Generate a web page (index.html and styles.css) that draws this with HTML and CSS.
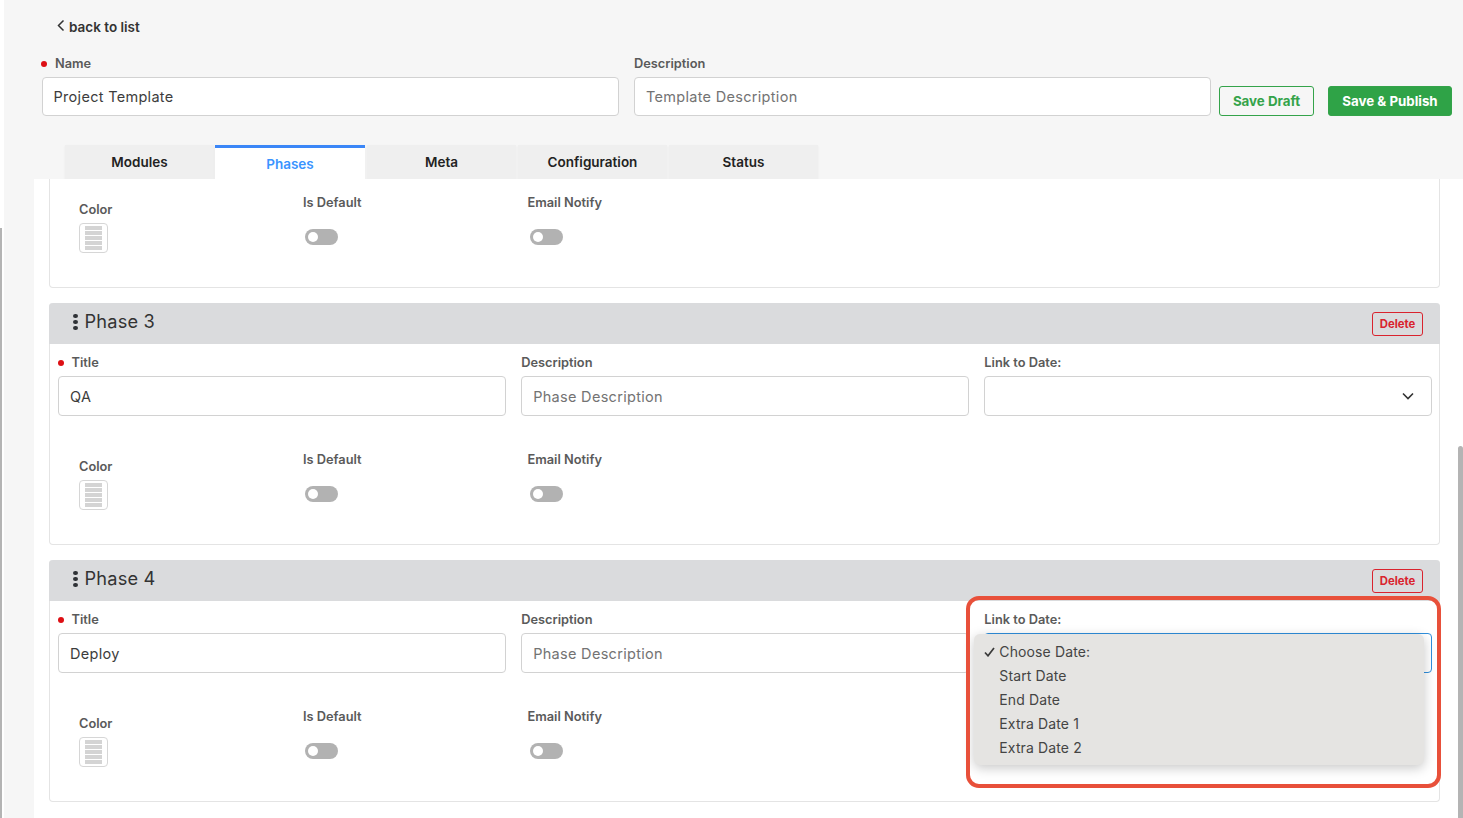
FILE: index.html
```html
<!DOCTYPE html>
<html lang="en">
<head>
<meta charset="utf-8">
<title>Project Template</title>
<link rel="stylesheet" href="styles.css">
</head>
<body>
<div class="page">
  <div class="edge"><span class="edge-thumb"></span></div>
  <main class="main">
    <header class="top">
      <a class="back" href="#">
        <svg class="back-icon" width="8" height="14" viewBox="0 0 8 14"><path d="M6.5 1.5 1.5 6.5l5 5" fill="none" stroke="#333" stroke-width="1.5"/></svg>
        back to list
      </a>
      <div class="top-row">
        <div class="field top-field">
          <label class="label required">Name</label>
          <input class="input" value="Project Template">
        </div>
        <div class="field top-field">
          <label class="label">Description</label>
          <input class="input" placeholder="Template Description">
        </div>
        <button class="btn btn-outline">Save Draft</button>
        <button class="btn btn-solid">Save &amp; Publish</button>
      </div>
      <nav class="tabs">
        <div class="tab">Modules</div>
        <div class="tab active">Phases</div>
        <div class="tab">Meta</div>
        <div class="tab">Configuration</div>
        <div class="tab">Status</div>
      </nav>
    </header>

    <section class="scroller">
      <div class="card card-cut">
        <div class="options options-cut">
          <div class="opt opt-color"><div class="label">Color</div><div class="swatch"><span class="stripes"></span></div></div>
          <div class="opt"><div class="label">Is Default</div><span class="toggle"></span></div>
          <div class="opt"><div class="label">Email Notify</div><span class="toggle"></span></div>
        </div>
      </div>

      <article class="card">
        <div class="card-head">
          <span class="grip"><i></i><i></i><i></i></span>
          <h2 class="card-title">Phase 3</h2>
          <button class="btn-delete">Delete</button>
        </div>
        <div class="fields">
          <div class="field"><label class="label required">Title</label><input class="input" value="QA"></div>
          <div class="field"><label class="label">Description</label><input class="input" placeholder="Phase Description"></div>
          <div class="field"><label class="label">Link to Date:</label>
            <div class="input select"><svg width="12" height="8" viewBox="0 0 12 8"><path d="M1 1.5l5 5 5-5" fill="none" stroke="#333" stroke-width="1.6"/></svg></div>
          </div>
        </div>
        <div class="options">
          <div class="opt opt-color"><div class="label">Color</div><div class="swatch"><span class="stripes"></span></div></div>
          <div class="opt"><div class="label">Is Default</div><span class="toggle"></span></div>
          <div class="opt"><div class="label">Email Notify</div><span class="toggle"></span></div>
        </div>
      </article>

      <article class="card">
        <div class="card-head">
          <span class="grip"><i></i><i></i><i></i></span>
          <h2 class="card-title">Phase 4</h2>
          <button class="btn-delete">Delete</button>
        </div>
        <div class="fields">
          <div class="field"><label class="label required">Title</label><input class="input" value="Deploy"></div>
          <div class="field"><label class="label">Description</label><input class="input" placeholder="Phase Description"></div>
          <div class="field field-open"><label class="label">Link to Date:</label>
            <div class="input select focused"></div>
            <ul class="menu">
              <li><svg class="check" width="11" height="10" viewBox="0 0 11 10"><path d="M1 5.5 4 8.8 10 1" fill="none" stroke="#3a3a3a" stroke-width="1.7"/></svg>Choose Date:</li>
              <li>Start Date</li>
              <li>End Date</li>
              <li>Extra Date 1</li>
              <li>Extra Date 2</li>
            </ul>
            <div class="highlight"></div>
          </div>
        </div>
        <div class="options">
          <div class="opt opt-color"><div class="label">Color</div><div class="swatch"><span class="stripes"></span></div></div>
          <div class="opt"><div class="label">Is Default</div><span class="toggle"></span></div>
          <div class="opt"><div class="label">Email Notify</div><span class="toggle"></span></div>
        </div>
      </article>
      <span class="scroll-thumb"></span>
    </section>
  </main>
</div>
</body>
</html>
```
FILE: styles.css
```css
* { box-sizing: border-box; }
html, body { margin: 0; height: 100%; overflow: hidden; }
body { font-family: Inter, "Liberation Sans", sans-serif; color: #333; background: #fff; }

.page { display: flex; height: 818px; }
.edge { position: relative; width: 4px; background: #fff; }
.edge-thumb { position: absolute; left: 0; top: 228px; bottom: 0; width: 2px; background: #b4b4b4; }
.main { flex: 1; min-width: 0; display: flex; flex-direction: column; background: #f6f6f6; }

.top { height: 179px; flex: none; padding: 18px 0 0 37.5px; }
.back { display: flex; align-items: center; gap: 4px; height: 18px; padding-left: 15.5px; font-size: 13.5px; font-weight: 600; color: #333; text-decoration: none; }
.back-icon { margin-top: -3px; }
.top-row { display: flex; align-items: flex-end; margin-top: 20px; }
.top-field { width: 577.5px; margin-right: 15px; }
.top-field + .top-field { width: 577px; margin-right: 8px; }

.field { display: flex; flex-direction: column; min-width: 0; position: relative; }
.label { display: block; height: 16px; line-height: 16px; font-size: 12.8px; font-weight: 600; color: #5a5a5a; margin-bottom: 5px; }
.required { position: relative; padding-left: 13.5px; }
.required::before { content: ""; position: absolute; left: -.5px; top: 5px; width: 6px; height: 6px; border-radius: 50%; background: #dd0f14; }

.input { width: 100%; height: 40px; border: 1.5px solid #d2d2d2; border-radius: 4px; background: #fff; padding: 0 11px; font: 400 14.5px Inter, "Liberation Sans", sans-serif; letter-spacing: .3px; color: #3c3c3c; outline: none; }
.top-field .input { height: 39px; }
.input::placeholder { color: #737373; opacity: 1; }
.select { display: flex; align-items: center; justify-content: flex-end; padding-right: 17px; }
.focused { border: 1px solid #2f8fdc; }

.btn { height: 30px; border-radius: 3px; font: 700 13.3px Inter, "Liberation Sans", sans-serif; border: 1px solid #34a34a; }
.btn-outline { width: 95px; background: transparent; color: #34a34a; margin-right: 14px; }
.btn-solid { width: 124px; background: #2fa347; color: #fff; }

.tabs { display: flex; gap: 2px; margin: 29px 0 0 23.5px; }
.tab { width: 149px; height: 34px; display: flex; align-items: center; justify-content: center; padding-bottom: 1px; background: #efefef; font-size: 13.5px; font-weight: 600; color: #222; box-shadow: 0 1px 2px rgba(0,0,0,.06); }
.tab.active { width: 150px; margin-left: -1px; background: #fff; color: #3a94ff; border-top: 3px solid #3b86f7; padding-bottom: 0; padding-top: 1px; }

.scroller { position: relative; flex: 1; min-height: 0; margin-left: 30px; padding: 0 23px 0 15px; background: #fff; display: flex; flex-direction: column; gap: 15px; overflow: hidden; }
.scroll-thumb { position: absolute; right: 0; top: 267px; bottom: 0; width: 5px; border-radius: 3px 3px 0 0; background: #b4b4b4; }

.card { flex: none; border: 1px solid #e4e4e4; border-top: 0; border-radius: 4px; background: #fff; }
.card-cut { border-radius: 0 0 4px 4px; }
.card-head { display: flex; align-items: center; height: 41px; margin: 0 -1px; padding: 0 17px 0 24px; background: #dadbdd; border-radius: 4px 4px 0 0; }
.grip { display: flex; flex-direction: column; gap: 2px; margin: -3px 7px 0 0; }
.grip i { display: block; width: 4.5px; height: 4px; border-radius: 50%; background: #2f3236; }
.card-title { flex: 1; margin: -5px 0 0; font-size: 18.2px; font-weight: 400; letter-spacing: .2px; color: #333; }
.btn-delete { width: 51px; height: 24px; padding: 0; background: transparent; border: 1px solid #d9232e; border-radius: 3px; color: #d9232e; font: 700 11.3px Inter, "Liberation Sans", sans-serif; }

.fields { display: grid; grid-template-columns: repeat(3, 1fr); gap: 15.5px; padding: 11px 7px 0 8px; }

.options { display: grid; grid-template-columns: 224px 224.5px 1fr; padding: 36px 0 34px 29px; }
.options-cut { padding-top: 16px; padding-bottom: 34px; }
.opt-color { padding-top: 7px; }
.opt { min-width: 0; }
.swatch { width: 29px; height: 30px; display: flex; justify-content: center; align-items: center; border: 1.5px solid #d6d6d6; border-radius: 4px; background: #fff; }
.stripes { display: block; width: 17px; height: 24px; background: repeating-linear-gradient(to bottom, #d4d4d4 0 4px, #fff 4px 5px); }
.toggle { display: block; position: relative; width: 33px; height: 16px; margin: 18px 0 0 2px; border-radius: 8px; background: #b2b2b2; }
.toggle::after { content: ""; position: absolute; left: 3px; top: 3px; width: 10px; height: 10px; border-radius: 50%; background: #fff; }

.menu { position: absolute; left: -10px; top: 22px; z-index: 2; width: 450px; margin: 0; padding: 6px 0 5px; list-style: none; background: #e5e4e2; border-radius: 6px; box-shadow: 0 3px 12px rgba(0,0,0,.22); font-size: 14px; }
.menu li { position: relative; height: 24px; line-height: 24px; padding-left: 25px; letter-spacing: .12px; color: #444; }
.check { position: absolute; left: 10px; top: 7px; }
.highlight { position: absolute; left: -18px; top: -16px; z-index: 3; width: 475px; height: 192px; border: 4px solid #e8503a; border-radius: 13px; pointer-events: none; }
```
